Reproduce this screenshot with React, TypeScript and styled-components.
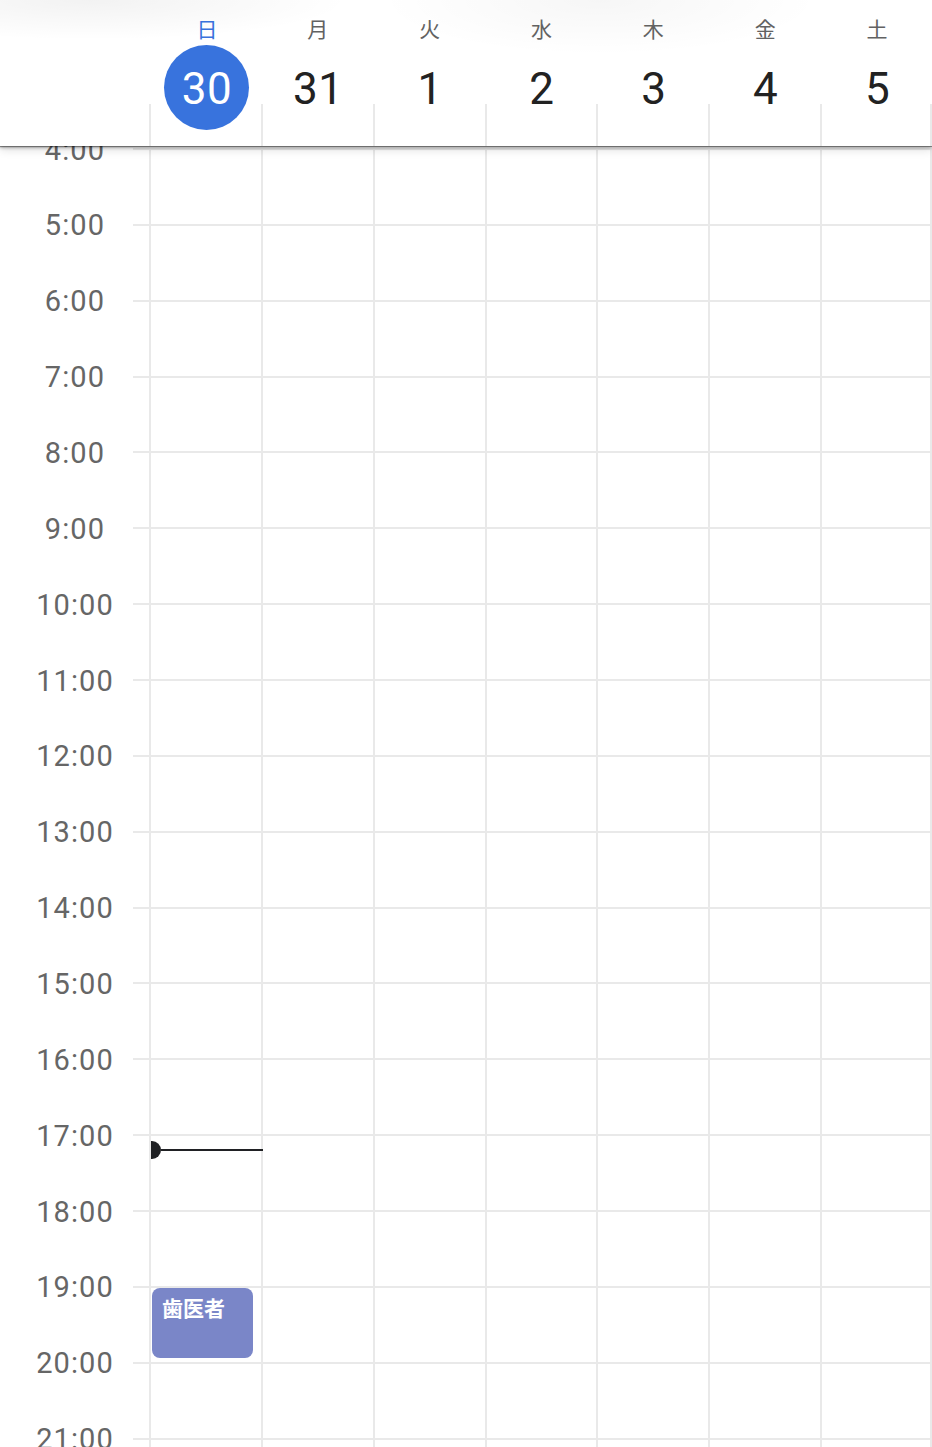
import React from "react";
import styled, { createGlobalStyle } from "styled-components";

const GlobalStyle = createGlobalStyle`
  html, body { margin: 0; padding: 0; background: #fff; }
  body { font-family: Roboto, "Noto Sans CJK JP", sans-serif; }
  * { box-sizing: border-box; }
`;

const ROW_H = 75.87;
const LINE = "#e9e9e9";

const Page = styled.div`
  width: 932px;
  height: 1447px;
  overflow: hidden;
  display: flex;
  flex-direction: column;
  background: #fff;
`;

const Header = styled.header`
  position: relative;
  z-index: 2;
  flex: 0 0 146px;
  display: grid;
  grid-template-columns: 149px repeat(7, 1fr);
  background:
    radial-gradient(ellipse 260px 40px at 90px 0px, rgba(0, 0, 0, 0.05), transparent),
    radial-gradient(ellipse 220px 55px at 600px 0px, rgba(0, 0, 0, 0.035), transparent),
    #fff;
  box-shadow: 0 1px 1px rgba(0, 0, 0, 0.4), 0 2px 3px rgba(0, 0, 0, 0.25),
    0 4px 9px rgba(0, 0, 0, 0.12);
`;

const DayHead = styled.div<{ $last?: boolean }>`
  position: relative;
  display: flex;
  flex-direction: column;
  align-items: center;
  padding-top: 16px;
  &::before {
    content: "";
    position: absolute;
    left: 0;
    top: 104px;
    bottom: 0;
    width: 2px;
    background: ${LINE};
  }
  ${(p) =>
    p.$last &&
    `&::after {
      content: "";
      position: absolute;
      right: 0;
      top: 104px;
      bottom: 0;
      width: 2px;
      background: ${LINE};
    }`}
`;

const DayLabel = styled.div<{ $today?: boolean }>`
  font-family: "Noto Sans CJK JP", sans-serif;
  font-size: 21px;
  line-height: 24px;
  height: 24px;
  color: ${(p) => (p.$today ? "#3872dc" : "#626262")};
  margin-left: ${(p) => (p.$today ? "4px" : "2px")};
`;

const DateNum = styled.div<{ $today?: boolean }>`
  position: relative;
  z-index: 1;
  margin-top: 5px;
  width: 85px;
  height: 85px;
  border-radius: 50%;
  display: flex;
  align-items: center;
  justify-content: center;
  font-family: Roboto, sans-serif;
  font-size: 44px;
  font-weight: 400;
  letter-spacing: 0.5px;
  color: ${(p) => (p.$today ? "#fff" : "#222")};
  background: ${(p) => (p.$today ? "#3873dd" : "transparent")};
  margin-left: ${(p) => (p.$today ? "4px" : "3px")};
  padding-top: 2px;
`;

const Body = styled.div`
  position: relative;
  z-index: 1;
  flex: 1;
  overflow: hidden;
  display: flex;
  padding-top: 2px;
`;

const Gutter = styled.div`
  flex: 0 0 133px;
  display: flex;
  flex-direction: column;
  margin-top: -${ROW_H / 2 - 1}px;
`;

const HourLabel = styled.div`
  flex: 0 0 ${ROW_H}px;
  display: flex;
  align-items: center;
  justify-content: center;
  padding-left: 17px;
  padding-top: 1px;
  font-family: Roboto, sans-serif;
  font-size: 29px;
  letter-spacing: 1.1px;
  color: #666;
`;

const Grid = styled.div`
  flex: 1;
  display: flex;
  flex-direction: column;
`;

const HourRow = styled.div`
  flex: 0 0 ${ROW_H}px;
  display: grid;
  grid-template-columns: 16px repeat(7, 1fr);
  border-top: 2px solid ${LINE};
`;

const Cell = styled.div<{ $last?: boolean }>`
  position: relative;
  border-left: 2px solid ${LINE};
  border-right: ${(p) => (p.$last ? `2px solid ${LINE}` : "none")};
`;

const Event = styled.div`
  position: absolute;
  top: 0px;
  left: 1px;
  width: 101px;
  height: 70px;
  border-radius: 8px;
  background: #7a86c8;
  color: #fff;
  font-family: "Noto Sans CJK JP", sans-serif;
  font-weight: 700;
  font-size: 21px;
  line-height: 24px;
  padding: 7px 10px;
  z-index: 2;
`;

const NowLine = styled.div`
  position: absolute;
  left: 0;
  right: -2px;
  top: 5px;
  height: 18px;
  display: flex;
  align-items: center;
  z-index: 2;
`;

const NowDot = styled.div`
  flex: 0 0 10px;
  height: 18px;
  border-radius: 0 10px 10px 0;
  background: #202124;
`;

const NowBar = styled.div`
  flex: 1;
  height: 2px;
  background: #202124;
`;

const days = [
  { label: "日", date: "30", today: true },
  { label: "月", date: "31" },
  { label: "火", date: "1" },
  { label: "水", date: "2" },
  { label: "木", date: "3" },
  { label: "金", date: "4" },
  { label: "土", date: "5" },
];

const hours = Array.from({ length: 19 }, (_, i) => i + 4);

export default function App() {
  return (
    <>
      <GlobalStyle />
      <Page>
        <Header>
          <div />
          {days.map((d, i) => (
            <DayHead key={d.label} $last={i === days.length - 1}>
              <DayLabel $today={d.today}>{d.label}</DayLabel>
              <DateNum $today={d.today}>{d.date}</DateNum>
            </DayHead>
          ))}
        </Header>
        <Body>
          <Gutter>
            {hours.map((h) => (
              <HourLabel key={h}>{`${h}:00`}</HourLabel>
            ))}
          </Gutter>
          <Grid>
            {hours.map((h) => (
              <HourRow key={h}>
                <div />
                {days.map((d, i) => (
                  <Cell key={d.label} $last={i === days.length - 1}>
                    {i === 0 && h === 17 && (
                      <NowLine>
                        <NowDot />
                        <NowBar />
                      </NowLine>
                    )}
                    {i === 0 && h === 19 && <Event>歯医者</Event>}
                  </Cell>
                ))}
              </HourRow>
            ))}
          </Grid>
        </Body>
      </Page>
    </>
  );
}
